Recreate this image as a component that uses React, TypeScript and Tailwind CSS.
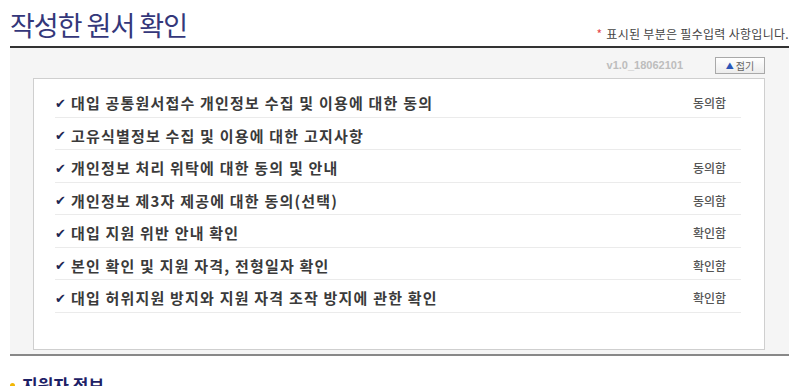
import React from 'react';

const rows = [
  { title: '대입 공통원서접수 개인정보 수집 및 이용에 대한 동의', status: '동의함' },
  { title: '고유식별정보 수집 및 이용에 대한 고지사항', status: '' },
  { title: '개인정보 처리 위탁에 대한 동의 및 안내', status: '동의함' },
  { title: '개인정보 제3자 제공에 대한 동의(선택)', status: '동의함' },
  { title: '대입 지원 위반 안내 확인', status: '확인함' },
  { title: '본인 확인 및 지원 자격, 전형일자 확인', status: '확인함' },
  { title: '대입 허위지원 방지와 지원 자격 조작 방지에 관한 확인', status: '확인함' },
];

const font = { fontFamily: '"Noto Sans CJK KR", "Noto Sans", sans-serif' };

export default function App() {
  return (
    <div className="w-[800px] h-[386px] overflow-hidden bg-white" style={font}>
      <div className="ml-[10px] w-[779px]">
        {/* header */}
        <div className="flex justify-between items-end h-[46px]">
          <h2 className="text-[27px] leading-[30px] tracking-[-1px] text-[#34377a] pb-[6px] font-normal">작성한 원서 확인</h2>
          <p className="text-[12px] tracking-[0.3px] text-[#444] pb-[5px] leading-[14px]">
            <span className="text-[#e5484d] mr-[4px]">*</span>표시된 부분은 필수입력 사항입니다.
          </p>
        </div>

        {/* panel */}
        <div className="border-t-2 border-[#333] border-b-2 border-b-[#888] bg-[#f5f5f5] pl-[23px] pr-[24px] pb-[4px]">
          <div className="flex justify-end items-center gap-[32px] pt-[9px] h-[26px]">
            <span className="text-[11px] font-bold text-[#bdbdbd]" style={{ fontFamily: '"Liberation Sans", Arial, sans-serif' }}>v1.0_18062101</span>
            <button className="w-[50px] h-[17px] border border-[#a9a9a9] bg-gradient-to-b from-white to-[#ececec] flex items-center justify-center gap-[2px] text-[10px] text-[#666] leading-none">
              <span className="text-[8px] text-[#2a56b8]">▲</span>접기
            </button>
          </div>

          <div className="mt-[4px] h-[272px] bg-white border border-[#cfcfcf] pl-[21px] pr-[23px] pt-[6px]">
            {rows.map((r) => (
              <div key={r.title} className="h-[32.5px] border-b border-[#ebebeb] flex items-center justify-between pt-[5px] pr-[15px]">
                <div className="flex items-center text-[15px] tracking-[1.2px] text-[#3a3a3a] font-semibold">
                  <span className="text-[#1d2652] text-[13px] mr-[5px] tracking-normal" style={{ fontFamily: '"DejaVu Sans", sans-serif' }}>✔</span>
                  {r.title}
                </div>
                <span className="text-[12px] text-[#555] font-medium">{r.status}</span>
              </div>
            ))}
          </div>
        </div>

        {/* next section */}
        <div className="flex items-center mt-[18px]">
          <span className="w-[5px] h-[5px] rounded-full bg-[#f2b705] mr-[7px]" />
          <h3 className="text-[17px] font-bold text-[#1d2166] leading-[22px]">지원자 정보</h3>
        </div>
      </div>
    </div>
  );
}
